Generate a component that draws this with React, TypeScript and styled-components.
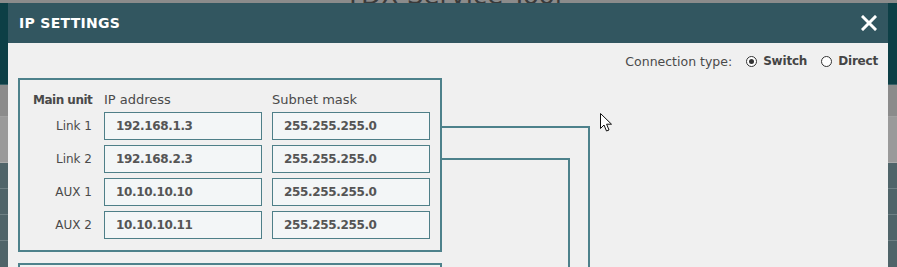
import styled, { createGlobalStyle } from "styled-components"

const GlobalStyle = createGlobalStyle`
	html, body {
		margin: 0;
		padding: 0;
		background: #4f6469;
		font-family: "DejaVu Sans", Verdana, sans-serif;
	}
`

const rows = [
	{ label: "Link 1", ip: "192.168.1.3", mask: "255.255.255.0" },
	{ label: "Link 2", ip: "192.168.2.3", mask: "255.255.255.0" },
	{ label: "AUX 1", ip: "10.10.10.10", mask: "255.255.255.0" },
	{ label: "AUX 2", ip: "10.10.10.11", mask: "255.255.255.0" },
]

const Page = styled.div`
	position: relative;
	width: 897px;
	height: 267px;
	overflow: hidden;
	background: #4f6469;
`

const AppTitleBar = styled.div`
	height: 3px;
	background: #8b8b8b;
	overflow: hidden;
	display: flex;
	justify-content: center;
	align-items: flex-end;
`

const AppTitle = styled.span`
	font-size: 26px;
	line-height: 26px;
	color: #3a3a3a;
	margin-bottom: -5px;
	padding-left: 10px;
`

const Band = styled.div<{ $height: number; $color: string }>`
	height: ${(p) => p.$height}px;
	background: ${(p) => p.$color};
	border-bottom: 1px solid rgba(255, 255, 255, 0.18);
`

const Dialog = styled.div`
	position: absolute;
	z-index: 10;
	left: 8px;
	top: 3px;
	width: 880px;
	height: 280px;
	background: #f0f0f0;
`

const DialogHeader = styled.div`
	height: 40px;
	background: #325660;
	display: flex;
	align-items: center;
	justify-content: space-between;
	padding: 0 10px 0 11px;
`

const DialogTitle = styled.h1`
	margin: 0;
	font-size: 14px;
	font-weight: bold;
	color: #ffffff;
	letter-spacing: 0.3px;
`

const CloseButton = styled.button`
	border: none;
	background: none;
	padding: 0;
	width: 18px;
	height: 18px;
	display: flex;
	align-items: center;
	justify-content: center;
	cursor: pointer;
`

const DialogBody = styled.div`
	position: relative;
	padding: 9px 10px 0 10px;
`

const ConnectionBar = styled.div`
	display: flex;
	justify-content: flex-end;
	align-items: center;
	height: 18px;
	font-size: 12.5px;
	color: #4a4a4a;
`

const ConnectionLabel = styled.span`
	margin-right: 14px;
`

const RadioOption = styled.label`
	display: flex;
	align-items: center;
	gap: 6px;
	font-size: 12px;
	font-weight: bold;
	letter-spacing: -0.2px;
	color: #454545;
	& + & {
		margin-left: 14px;
	}
`

const RadioCircle = styled.span<{ $checked: boolean }>`
	width: 9px;
	height: 9px;
	border: 1px solid #333;
	border-radius: 50%;
	background: #fff;
	display: flex;
	align-items: center;
	justify-content: center;
	&::after {
		content: "";
		width: 5px;
		height: 5px;
		border-radius: 50%;
		background: ${(p) => (p.$checked ? "#333" : "transparent")};
	}
`

const UnitBox = styled.div`
	border: 2px solid #4d818b;
	margin-top: 8px;
	padding: 13px 10px 11px 13px;
	box-sizing: content-box;
	width: 397px;
	display: grid;
	grid-template-columns: 61px 158px 158px;
	column-gap: 10px;
	row-gap: 5px;
	align-items: center;
	font-size: 12px;
	color: #4a4a4a;
`

const SecondBox = styled(UnitBox)`
	margin-top: 11px;
	height: 40px;
`

const ColumnHeading = styled.span<{ $bold?: boolean }>`
	font-size: ${(p) => (p.$bold ? "12px" : "13px")};
	font-weight: ${(p) => (p.$bold ? "bold" : "normal")};
	letter-spacing: ${(p) => (p.$bold ? "-0.5px" : "0")};
	text-align: ${(p) => (p.$bold ? "right" : "left")};
	padding-right: ${(p) => (p.$bold ? "2px" : "0")};
	white-space: nowrap;
	line-height: 14px;
`

const RowLabel = styled.span`
	text-align: right;
	padding-right: 2px;
	white-space: nowrap;
`

const AddressInput = styled.input`
	box-sizing: border-box;
	height: 28px;
	width: 158px;
	border: 1px solid #4e7f88;
	background: #f3f6f7;
	padding: 0 0 0 11px;
	font-family: "DejaVu Sans", Verdana, sans-serif;
	font-size: 12px;
	font-weight: bold;
	letter-spacing: -0.35px;
	color: #555;
	outline: none;
`

const Connectors = styled.svg`
	position: absolute;
	left: 0;
	top: 0;
	pointer-events: none;
`

const Pointer = styled.svg`
	position: absolute;
	left: 592px;
	top: 110px;
`

export default function App() {
	return (
		<>
			<GlobalStyle />
			<Page>
				<AppTitleBar>
					<AppTitle>TDX Service Tool</AppTitle>
				</AppTitleBar>
				<Band $height={81} $color="#0d3f46" />
				<Band $height={31} $color="#8b8b8b" />
				<Band $height={45} $color="#9a9a9a" />
				<Band $height={25} $color="#4f6469" />
				<Band $height={25} $color="#4f6469" />
				<Band $height={25} $color="#4f6469" />

				<Dialog>
					<DialogHeader>
						<DialogTitle>IP SETTINGS</DialogTitle>
						<CloseButton aria-label="Close">
							<svg width="16" height="16" viewBox="0 0 16 16">
								<path d="M2 2 L14 14 M14 2 L2 14" stroke="#fff" strokeWidth="3" strokeLinecap="square" />
							</svg>
						</CloseButton>
					</DialogHeader>
					<DialogBody>
						<ConnectionBar>
							<ConnectionLabel>Connection type:</ConnectionLabel>
							<RadioOption>
								<RadioCircle $checked={true} />
								Switch
							</RadioOption>
							<RadioOption>
								<RadioCircle $checked={false} />
								Direct
							</RadioOption>
						</ConnectionBar>

						<UnitBox>
							<ColumnHeading $bold>Main unit</ColumnHeading>
							<ColumnHeading>IP address</ColumnHeading>
							<ColumnHeading>Subnet mask</ColumnHeading>
							{rows.map((r) => (
								<>
									<RowLabel key={r.label + "l"}>{r.label}</RowLabel>
									<AddressInput key={r.label + "i"} defaultValue={r.ip} />
									<AddressInput key={r.label + "m"} defaultValue={r.mask} />
								</>
							))}
						</UnitBox>
						<SecondBox />

						<Connectors width="880" height="240" viewBox="0 0 880 240">
							<path d="M434 84 H581 V240" fill="none" stroke="#4d818b" strokeWidth="2" />
							<path d="M434 116 H561 V240" fill="none" stroke="#4d818b" strokeWidth="2" />
						</Connectors>
					</DialogBody>

					<Pointer width="14" height="22" viewBox="0 0 14 22">
						<path
							d="M0.5 0.5 L0.5 15.5 L4 12 L6.5 18 L9 17 L6.6 11.2 L11.5 11.2 Z"
							fill="#fff"
							stroke="#111"
							strokeWidth="1"
						/>
					</Pointer>
				</Dialog>
			</Page>
		</>
	)
}
